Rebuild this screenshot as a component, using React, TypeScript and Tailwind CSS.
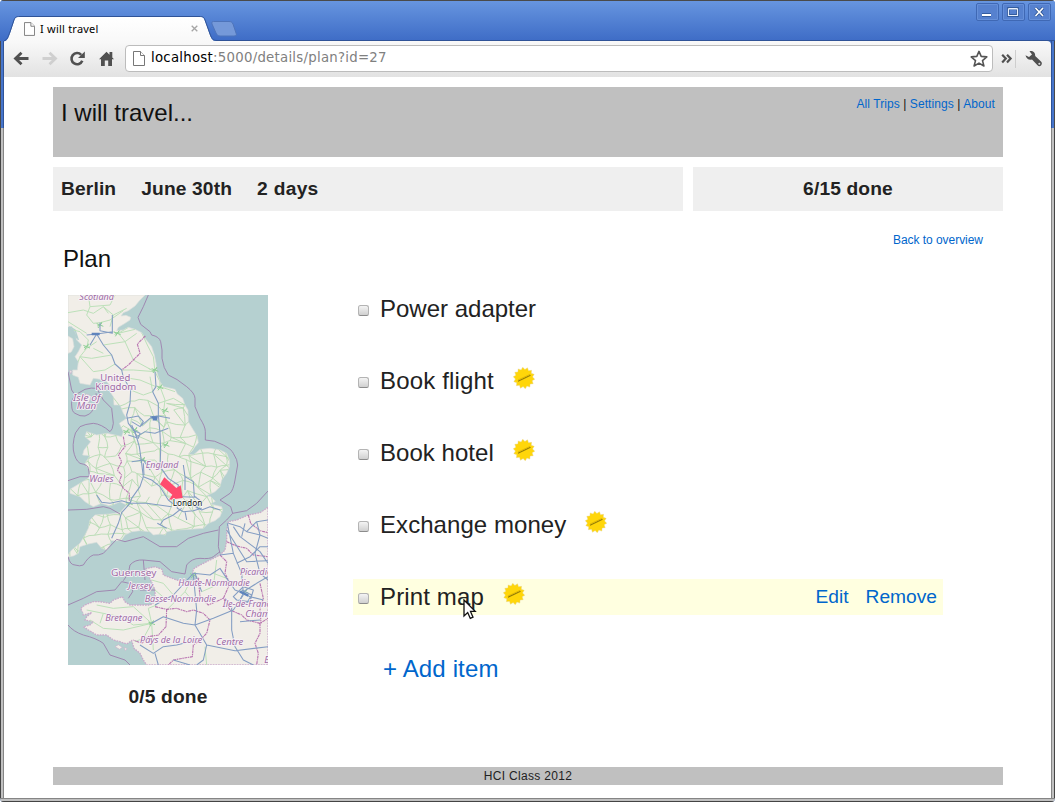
import React from "react";

const SANS = "font-['Liberation_Sans',Arial,sans-serif]";

const GB =
  "M24,15 L255,15 240,30 225,48 205,62 190,68 183,78 198,76 212,82 210,90 195,100 175,112 170,122 190,120 205,112 225,118 245,128 255,145 275,170 283,195 288,220 290,245 300,275 310,290 345,298 352,312 368,325 375,345 384,360 385,395 400,420 412,440 415,458 405,470 397,482 385,492 400,495 420,478 450,475 480,480 500,490 508,510 508,530 500,550 485,570 480,590 465,605 440,617 452,620 466,634 450,642 485,650 488,660 480,680 465,692 445,700 430,715 390,718 350,720 320,725 316,735 300,732 280,735 270,725 240,722 215,725 195,735 183,752 152,752 150,765 140,780 125,775 110,757 85,762 60,770 55,790 40,798 24,800 24,795 35,780 60,760 75,735 85,715 90,690 105,675 150,672 180,668 200,645 180,635 150,648 125,640 100,650 75,635 60,620 30,610 30,598 60,580 85,565 90,545 75,520 90,497 68,495 72,480 92,455 75,440 80,425 110,435 140,430 165,435 185,440 190,425 178,400 200,385 190,370 180,345 162,345 160,320 150,305 155,290 135,270 100,265 90,285 60,280 55,262 38,255 38,240 52,240 55,215 45,200 55,185 65,165 50,150 45,125 30,110 24,110 Z M24,138 L38,146 42,170 34,186 24,190 Z";
const FRANCE =
  "M624,652 L600,668 565,675 530,690 505,695 500,720 500,750 495,780 480,795 450,810 420,825 400,837 398,852 415,865 385,875 350,870 310,855 306,838 285,830 258,836 265,855 272,870 285,900 285,935 270,945 240,945 210,945 195,935 187,920 160,930 150,940 120,935 100,935 75,945 62,955 70,975 95,968 80,980 75,990 100,995 90,1005 70,1010 85,1020 110,1035 140,1035 160,1050 180,1055 200,1062 215,1052 222,1075 240,1090 250,1110 260,1125 624,1125 Z";

const seaBorders = [
  "M265,15 L250,50 234,82 242,103 270,125 275,135 Q298,140 302,155 Q308,180 306,205 Q310,235 325,255 Q350,265 380,290 Q405,310 405,325 L405,350 420,385 Q436,410 436,425 L436,450 Q465,450 490,465 Q515,478 520,490 Q533,510 533,525 L525,570 Q520,600 510,610 L480,630 512,650 518,670 500,690 478,710 475,770 480,790",
  "M518,670 L560,662 590,640 624,603",
  "M24,800 Q30,825 45,825 Q60,830 70,825 Q85,800 100,795 Q115,797 130,790 L170,748 195,755 250,740 300,770 350,770 385,745 430,730 475,720",
  "M24,245 L35,300 45,315 75,298 Q95,292 110,295 L130,330 155,355 160,400 Q158,420 150,425 Q125,402 100,400 Q75,402 60,410 Q42,430 42,445 Q38,465 40,480 Q45,510 60,520 Q85,525 85,535 Q90,560 85,560 L60,560 24,572",
  "M24,660 L80,658 130,650 150,655 180,672",
  "M45,315 Q32,335 35,345 Q35,365 45,370 Q60,380 75,378 Q92,372 95,365 L112,335 108,310",
  "M24,945 L70,925 110,905 165,900 185,875 230,885 240,900 285,900",
  "M205,850 L210,825 Q225,808 250,810 L300,815 335,845 375,852 380,825 Q395,805 420,805 Q450,808 460,800 L480,785",
  "M205,850 L190,872 M250,810 L255,870 M24,1005 Q40,1025 70,1035 Q110,1045 130,1060 L150,1095 195,1110 210,1125 M215,880 L218,905 205,925",
];

const regionBorders = [
  "M256,138 L232,162 240,190 225,205 205,225 185,240",
  "M190,440 L195,470 175,495 185,515 172,540 185,555 178,575 190,595 208,610 208,632",
  "M285,950 L320,958 350,955 380,965 400,960 430,970 450,990 440,1030 420,1050 400,1065 397,1100 340,1110 325,1125",
  "M320,958 L318,1010 295,1035 265,1040 245,1060 220,1050",
  "M415,865 L420,920 445,945 490,925 510,960 545,975 560,990 600,1000 624,985",
  "M480,795 L500,815 495,850 510,880 490,925",
  "M500,755 L530,768 560,775 580,795 624,800",
  "M565,675 L572,700 600,722 624,728",
  "M600,1000 L600,1030 585,1060 595,1090 590,1125",
  "M600,880 L610,925 600,955 603,1000",
];

const motorways = [
  "M157,75 L157,130 120,122 120,98 M80,135 L110,132 158,125 M110,132 L90,165 M110,132 L130,165 155,195 165,222 185,240 190,262 212,300 210,340 200,375 205,400 225,425 238,470 245,520 250,560 240,590 215,625 210,640 185,668 175,700 155,745",
  "M285,245 L288,290 278,305 295,340 295,375 300,430 302,480 300,530 325,565 355,585 352,608 365,615",
  "M200,385 L235,378 250,395 240,410 215,395 M270,380 L295,378 330,385 M240,410 L270,385 290,378 M215,405 L230,440 255,425 285,430 325,415 M218,420 L240,430 235,445 205,435",
  "M250,560 L275,570 300,590 325,630 350,650 M215,515 L250,510 270,540 M250,520 L252,555",
  "M110,615 L125,637 150,640 185,632 210,640 260,640 335,650 M300,705 L310,690 340,675 365,655 M292,700 L320,715",
  "M370,525 L375,560 375,600 M375,560 L400,575 403,620 M365,620 L410,622 M385,638 L425,660 450,650 480,660 M375,665 L380,690 M350,635 L352,655 370,665 400,662 425,655 M402,618 L425,635 410,655",
  "M505,700 L540,710 560,725 590,695 624,690 M502,700 L520,790 545,850 550,910 M520,710 L540,740 600,785 624,820 M560,725 L600,735 624,745 M500,720 L560,815 624,812 M480,795 L520,790 M590,695 L600,735 585,790 600,850 624,870 M545,740 L555,700 M530,820 L570,800 600,770 624,770",
  "M400,850 L450,855 480,835 500,865 525,900 550,910 M285,945 L340,915 400,850 M405,850 L425,905 M400,855 L410,960 405,1005 440,1065 M275,1000 L310,980 370,1000 405,1005 M405,1005 L460,985 520,960 550,915 M515,945 L515,1020 525,1070 550,1110 580,1125 M440,1065 L525,1082 624,1070 M440,1065 L430,1110 410,1125",
  "M550,890 L520,920 530,930 570,935 580,900 550,890 M550,910 L570,920 610,930 M550,910 L535,940 560,940 575,915 545,900 M540,995 L600,990 M240,1065 L280,1090 310,1070 350,1065 410,1050 M285,1090 L295,1125 M340,1110 L390,1125 M550,905 L590,880 624,860",
];

const greenRoads = [
  "M24,68 L70,60 100,70 130,50 160,75 200,55 M85,15 L90,50 80,75 100,100 120,98 M120,98 L150,90 190,62 M24,95 L80,130 M40,120 L60,125 85,150 80,175 60,200 45,240 M158,125 L175,130 205,112 M175,130 L195,155 220,210 275,240 M175,130 L225,118 M130,165 L195,155 230,130 M155,195 L95,205 60,200 M100,175 L130,190 M165,222 L135,240 100,245 60,200 M80,175 L110,155",
  "M185,240 L220,240 285,245 M285,245 L280,200 262,165 245,128 M285,245 L300,275 300,290 345,305 M285,245 L265,235 M190,262 L240,270 288,290 M212,300 L250,315 278,305 M295,340 L340,325 375,345 M300,290 L315,330 310,370 M278,305 L270,260 M160,75 L150,110 M90,50 L150,45 165,15 M130,50 L145,70",
  "M110,945 L160,955 220,950 275,1000 M80,960 L130,970 180,980 M180,980 L220,1005 275,1000 M275,1000 L265,955 290,945 M275,1000 L250,1045 225,1055 M90,990 L130,1015 190,1020 275,1000 M275,1000 L280,1080 M130,970 L120,1000 M400,855 L375,905 320,960 M425,905 L460,890 470,810 M460,850 L500,865 M435,1070 L440,1125 M340,915 L310,880 275,870 M375,905 L400,935 M285,900 L320,930",
];

const greenDots = [
  [285, 240],
  [300, 292],
  [172, 130],
  [120, 105],
  [316, 362],
  [200, 425],
  [225, 420],
  [318, 465],
  [248, 510],
  [275, 1000],
  [375, 640],
  [80, 170],
  [400, 855],
  [555, 905],
  [208, 640],
];

const noise = (a: number, b: number) => {
  const v = Math.sin(a * 127.1 + b * 311.7) * 43758.5453;
  return v - Math.floor(v);
};

const minorRoads = () => {
  const step = 31;
  const node = (i: number, j: number) => [
    24 + i * step + (noise(i, j) - 0.5) * 30,
    335 + j * step + (noise(j + 40, i) - 0.5) * 30,
  ];
  let d = "";
  for (let i = 0; i < 17; i++) {
    for (let j = 0; j < 15; j++) {
      const [x, y] = node(i, j);
      const [rx, ry] = node(i + 1, j);
      const [dx, dy] = node(i, j + 1);
      const [cx, cy] = node(i + 1, j + 1);
      const m = (noise(i + 9, j) - 0.5) * 12;
      if (noise(i, j + 70) > 0.15) d += `M${x},${y}Q${(x + rx) / 2},${(y + ry) / 2 + m} ${rx},${ry}`;
      if (noise(i + 30, j) > 0.15) d += `M${x},${y}Q${(x + dx) / 2 + m},${(y + dy) / 2} ${dx},${dy}`;
      if (noise(i + 5, j + 5) > 0.6) d += `M${x},${y}L${cx},${cy}`;
    }
  }
  return d;
};

type Label = { t: string; x: number; y: number; w: number; s?: number; up?: boolean };
const labels: Label[] = [
  { t: "Scotland", x: 58, y: 31, w: 104 },
  { t: "United", x: 121, y: 274, w: 90, s: 27, up: true },
  { t: "Kingdom", x: 106, y: 300, w: 123, s: 27, up: true },
  { t: "Isle of", x: 39, y: 332, w: 82 },
  { t: "Man", x: 50, y: 356, w: 59 },
  { t: "England", x: 257, y: 535, w: 98 },
  { t: "Wales", x: 88, y: 577, w: 73 },
  { t: "Guernsey", x: 153, y: 858, w: 136, s: 27, up: true },
  { t: "Jersey", x: 205, y: 898, w: 74 },
  { t: "Haute-Normandie", x: 355, y: 889, w: 214 },
  { t: "Picardie", x: 540, y: 855, w: 94 },
  { t: "Basse-Normandie", x: 254, y: 936, w: 214 },
  { t: "Île-de-France", x: 488, y: 950, w: 158 },
  { t: "Cham", x: 556, y: 982, w: 75 },
  { t: "Bretagne", x: 136, y: 992, w: 111 },
  { t: "Pays de la Loire", x: 240, y: 1058, w: 187 },
  { t: "Centre", x: 468, y: 1065, w: 82 },
  { t: "B", x: 613, y: 1119, w: 17 },
];

function TripMap() {
  return (
    <svg viewBox="24 15 600 1110" className="block h-[370px] w-[200px]">
      <defs>
        <clipPath id="gb">
          <path d={GB} />
        </clipPath>
        <clipPath id="land">
          <path d={GB + FRANCE} />
        </clipPath>
      </defs>
      <rect x="24" y="15" width="600" height="1110" fill="#b5d0d0" />
      <path d={GB} fill="#f1eee8" stroke="#dde0dc" strokeWidth="2" />
      <path d={FRANCE} fill="#f1eee8" stroke="#c9a9cb" strokeWidth="4" strokeDasharray="5 3" />
      <path d="M55,350 L62,325 80,312 94,318 88,335 70,352Z M165,1070 l10,-6 12,8 -8,6Z M192,1072 l10,4 -6,6Z M28,240 l8,4 -4,8Z" fill="#f1eee8" stroke="#c9b4cb" strokeWidth="2" />
      <path d="M24,120 L35,112 50,145 M28,110 L45,120 55,150 M40,940 L62,955 M45,962 L70,970 M60,1008 L75,1005" stroke="#b5d0d0" strokeWidth="4" fill="none" />
      <g fill="none" strokeLinejoin="round">
        <g clipPath="url(#land)">
          {greenRoads.map((d) => (
            <path key={d} d={d} stroke="#bce0b9" strokeWidth="3" />
          ))}
        </g>
        <g clipPath="url(#gb)">
          <path d={minorRoads()} stroke="#b7dcb4" strokeWidth="2.8" />
        </g>
        {seaBorders.map((d) => (
          <path key={d} d={d} stroke="#9b7bab" strokeWidth="3" opacity="0.85" />
        ))}
        {regionBorders.map((d) => (
          <path key={d} d={d} stroke="#b062a8" strokeWidth="3.4" strokeDasharray="9 2 4 2" opacity="0.85" />
        ))}
        {greenDots.map(([x, y]) => (
          <path key={`${x}-${y}`} d={`M${x - 10},${y - 4}l20,8M${x - 6},${y + 9}l12,-18M${x - 8},${y + 3}l14,-8`} stroke="#8fd096" strokeWidth="3" />
        ))}
        {motorways.map((d) => (
          <path key={d} d={d} stroke="#839dc3" strokeWidth="3.2" />
        ))}
        <path d="M95,132h24M275,382h18M278,388h14M540,905l25,12" stroke="#5f84bd" strokeWidth="7" />
      </g>
      <g fontFamily="'Noto Sans','DejaVu Sans',sans-serif" fill="#9d6ca3" stroke="#f8f2f8" strokeWidth="5" strokeLinejoin="round" paintOrder="stroke">
        {labels.map((l) => (
          <text key={l.t} x={l.x} y={l.y} textLength={l.w} lengthAdjust="spacingAndGlyphs" fontSize={l.s ?? 27} fontStyle={l.up ? "normal" : "italic"}>
            {l.t}
          </text>
        ))}
      </g>
      <path d="M313,562 L349,594 362,586 368,624 327,629 337,614 300,583Z" fill="#ff4b6e" />
      <text x="338" y="649" textLength="89" lengthAdjust="spacingAndGlyphs" fontFamily="'Noto Sans',sans-serif" fontSize="26" fill="#111" stroke="#fff" strokeWidth="4" paintOrder="stroke">
        London
      </text>
    </svg>
  );
}

function PageIcon({ className }: { className: string }) {
  return (
    <svg viewBox="0 0 12 15" className={className} fill="#fff" stroke="#777" strokeWidth="1">
      <path d="M.5,.5 H7.5 L11.5,4.5 V14.5 H.5Z" />
      <path d="M7.5,.5 V4.5 H11.5" />
    </svg>
  );
}

function WindowButton({ children }: { children: React.ReactNode }) {
  return (
    <div className="h-[18px] w-[23px] rounded-[2px] border border-[#3f68b4] bg-[#6690d9] p-px">
      <svg viewBox="0 0 19 14" className="block h-[14px] w-[19px] bg-[#5681cf]" fill="none">
        {children}
      </svg>
    </div>
  );
}

function Star() {
  let d = "";
  for (let i = 0; i < 28; i++) {
    const r = i % 2 ? 8.6 : 10.8;
    const a = (i * Math.PI) / 14 - Math.PI / 2 - 0.12;
    d += `${i ? "L" : "M"}${(11 + r * Math.cos(a)).toFixed(2)},${(11 + r * Math.sin(a)).toFixed(2)}`;
  }
  return (
    <svg viewBox="0 0 22 22" className="-mt-[6px] h-[22px] w-[22px] shrink-0">
      <path d={d + "Z"} fill="#ffd60a" stroke="#e2d28a" strokeWidth=".4" />
      <path d="M5,14.2 L17.5,8.3" stroke="#957d08" strokeWidth="1.2" />
      <path d="M5,13 L17,7.4" stroke="#d5af05" strokeWidth=".7" />
    </svg>
  );
}

function Item({ text, star, active, tracking = "" }: { text: string; star?: boolean; active?: boolean; tracking?: string }) {
  return (
    <div className={`relative flex h-9 w-[590px] items-center pl-[5px] ${active ? "bg-[#ffffe0]" : ""}`}>
      <span className="mt-[3px] h-[11px] w-[11px] rounded-[2.5px] border border-[#b4b4b4] border-b-[#8c8c8c] bg-linear-to-b from-[#f4f4f4] to-[#d0d0d0]" />
      <span className={`ml-[11px] whitespace-nowrap text-[24px] leading-9 text-[#222] ${tracking}`}>{text}</span>
      {star && (
        <span className="ml-[19px] flex">
          <Star />
        </span>
      )}
      {active && (
        <>
          <span className="ml-auto flex gap-[17px] pr-[6px] text-[19.2px] text-[#0066cc]">
            <span>Edit</span>
            <span>Remove</span>
          </span>
          <svg viewBox="0 0 14 22" className="absolute left-[110px] top-[20px] h-[22px] w-[14px]">
            <path d="M1,1 V17 L4.7,13.6 L7.3,19.4 L10,18.2 L7.5,12.4 H12.2Z" fill="#fff" stroke="#111" strokeWidth="1.3" />
          </svg>
        </>
      )}
    </div>
  );
}

function TitleBar() {
  return (
    <div className="relative flex h-[41px] shrink-0 justify-between bg-linear-to-b from-[#6896e0] to-[#3e6cc6]">
      <div className="relative mt-[16px] h-[25px] w-[240px]">
        <svg viewBox="0 0 240 26" className="absolute left-0 top-0 h-[26px] w-[240px]">
          <defs>
            <linearGradient id="tab" x1="0" y1="0" x2="0" y2="1">
              <stop offset="0" stopColor="#fff" />
              <stop offset="1" stopColor="#f8f8f8" />
            </linearGradient>
          </defs>
          <path d="M4,26 C8,24 8,22 10,17 L14,5 C15,2 16,.8 20,.8 H199 C203,.8 204,2 205,5 L210,19 C212,24 213,25 217,25 V26Z" fill="url(#tab)" />
          <path d="M4,25 C8,23 8,21 10,16 L14,4 C15,1.2 16,.5 20,.5 H199 C203,.5 204,1.2 205,4 L210,18 C212,23.5 213,24.5 217,24.5 H240" fill="none" stroke="#2f5397" strokeWidth="1" />
          <path d="M213.5,5.5 H229 C231,5.5 232,6 233,8 L236,17 C237,19 236,20 234,20 H220 C218,20 217,19 216,17 L212,8 C211.500,6.500 212,5.500 213.500,5.500Z" fill="#7599d9" stroke="#4e74ba" />
        </svg>
        <div className="relative flex h-[25px] items-center pl-[24px]">
          <PageIcon className="h-[14px] w-[11px]" />
          <span className="ml-[5px] w-[60px] whitespace-nowrap font-['Noto_Sans',sans-serif] text-[11px] leading-[16px] tracking-[0.22px] text-black">I will travel</span>
          <svg viewBox="0 0 8 8" className="ml-[91px] h-[7px] w-[7px]">
            <path d="M.8,.8 L7.200,7.200 M7.200,.8 L.8,7.200" stroke="#a5a5a5" strokeWidth="1.500" />
          </svg>
        </div>
      </div>
      <div className="flex gap-[3px] pr-[4px] pt-[3px]">
        <WindowButton>
          <path d="M4,10 H13" stroke="#29508f" strokeWidth="3.500" />
          <path d="M4,10 H13" stroke="#fff" strokeWidth="2" />
        </WindowButton>
        <WindowButton>
          <path d="M4.500,3.500 H13.500 V10.500 H4.500Z" stroke="#29508f" strokeWidth="2.600" />
          <path d="M4.500,4 H13.500 V10.500 H4.500Z M4.500,3.500 H13.500" stroke="#e8effc" strokeWidth="1.200" />
        </WindowButton>
        <WindowButton>
          <path d="M5.500,3 L13,11 M13,3 L5.500,11" stroke="#29508f" strokeWidth="3.200" />
          <path d="M5.500,3 L13,11 M13,3 L5.500,11" stroke="#fff" strokeWidth="1.700" />
        </WindowButton>
      </div>
      <div className="absolute inset-x-0 top-0 h-px bg-[#4a4a4a]" />
      <div className="absolute bottom-0 left-[217px] right-0 h-px bg-[#2f5397]" />
    </div>
  );
}

function Toolbar() {
  return (
    <div className="flex h-[36px] shrink-0 items-start rounded-tr-[4px] bg-linear-to-b from-[#f9f9f9] to-[#e2e2e2] pt-[4px]">
      <svg viewBox="0 0 116 28" className="h-[28px] w-[116px] shrink-0" fill="none">
        <path d="M24.500,13.500 H12 M17.500,7.800 L11.500,13.500 L17.500,19.200" stroke="#505050" strokeWidth="2.800" />
        <path d="M38.500,13.500 H51 M45.500,7.800 L51.500,13.500 L45.500,19.200" stroke="#cfcfcf" strokeWidth="2.800" />
        <path d="M78.300,15.800 A5.600,5.600 0 1 1 77.200,9.800" stroke="#505050" strokeWidth="2.600" />
        <path d="M80.800,6.500 V13 H74Z" fill="#505050" />
        <path d="M95,14.200 L102.500,6.800 L105.500,9.700 V7 H108.300 V12.500 L110,14.200 H108 V21 H104.200 V15.500 H100.800 V21 H97 V14.200Z" fill="#505050" />
      </svg>
      <div className="ml-[5px] flex h-[27px] w-[868px] shrink-0 items-center rounded-[4px] border border-[#bcbcbc] bg-white pl-[7px] pr-[4px]">
        <PageIcon className="h-[15px] w-[12px]" />
        <span className="-mt-[2px] ml-[6px] whitespace-nowrap font-['DejaVu_Sans',sans-serif] text-[13.3px] tracking-[0.26px] text-[#808080]">
          <span className="text-black">localhost</span>:5000/details/plan?id=27
        </span>
        <svg viewBox="0 0 18 18" className="ml-auto h-[18px] w-[18px]">
          <path d="M9,1.400 L11.200,6.400 L16.800,6.900 L12.500,10.600 L13.900,16 L9,13.100 L4.100,16 L5.500,10.600 L1.200,6.900 L6.800,6.400Z" fill="#fff" stroke="#555" strokeWidth="1.600" strokeLinejoin="round" />
        </svg>
      </div>
      <svg viewBox="0 0 58 28" className="h-[28px] w-[58px] shrink-0" fill="none">
        <path d="M9.200,9.800 L12.800,13.600 L9.200,17.400 M14,9.800 L17.600,13.600 L14,17.400" stroke="#505050" strokeWidth="2.200" />
        <path d="M22.500,5 V23" stroke="#cecece" />
        <path d="M36.500,6.300 C39.500,5.500 42.500,7.500 42.200,11 L48,16.600 C49.300,18 49,19.500 48,20.500 C47,21.500 45.500,21.500 44.500,20.300 L39,14.500 C36,15.400 33,13.500 32.500,10.200 L36,12 L39,9.500 Z" fill="#505050" />
        <circle cx="46.300" cy="18.700" r="1" fill="#ddd" />
      </svg>
    </div>
  );
}

function Page() {
  return (
    <div className={`flex grow flex-col bg-white px-[49px] pt-[10px] ${SANS} text-[12px] text-[#222]`}>
      <header className="flex h-[70px] w-[950px] justify-between bg-[#c0c0c0] px-[8px]">
        <div className="pt-[8px] text-[24px] leading-[36px] text-[#111]">I will travel...</div>
        <div className="whitespace-pre pt-[8px] leading-[18px] tracking-[0.08px] text-[#111]">
          <span className="text-[#0066cc]">All Trips</span> | <span className="text-[#0066cc]">Settings</span> | <span className="text-[#0066cc]">About</span>
        </div>
      </header>
      <div className="mt-[10px] flex w-[950px] gap-[10px] text-[19.2px] font-bold leading-[43px] tracking-[0.14px]">
        <div className="flex h-[44px] w-[630px] shrink-0 gap-[25px] bg-[#efefef] pl-[8px]">
          <span>Berlin</span>
          <span>June 30th</span>
          <span className="tracking-[0.3px]">2 days</span>
        </div>
        <div className="h-[44px] w-[310px] bg-[#efefef] text-center">6/15 done</div>
      </div>
      <div className="mt-[20px] flex h-[64px] w-[950px] justify-between pl-[10px] pr-[20px]">
        <h1 className="pt-[10px] text-[24px] leading-[36px] text-[#111]">Plan</h1>
        <span className="leading-[18px] tracking-[-0.04px] text-[#0066cc]">Back to overview</span>
      </div>
      <div className="flex h-[472px] w-[950px] pl-[15px]">
        <div className="w-[200px]">
          <TripMap />
          <div className="mt-[18px] text-center text-[19.2px] font-bold leading-[28px] tracking-[0.14px]">0/5 done</div>
        </div>
        <div className="-mt-[4px] ml-[85px] flex flex-col gap-[36px]">
          <Item text="Power adapter" />
          <Item text="Book flight" star tracking="tracking-[0.17px]" />
          <Item text="Book hotel" star tracking="tracking-[0.04px]" />
          <Item text="Exchange money" star tracking="tracking-[0.06px]" />
          <Item text="Print map" star active tracking="tracking-[0.13px]" />
          <div className="pl-[30px] text-[24px] leading-[36px] tracking-[0.15px] text-[#0066cc]">+ Add item</div>
        </div>
      </div>
      <footer className="h-[18px] w-[950px] bg-[#c0c0c0] text-center leading-[18px] tracking-[0.33px]">HCI Class 2012</footer>
    </div>
  );
}

function SideFrame({ right }: { right?: boolean }) {
  return (
    <div className={`flex w-[4px] shrink-0 flex-col ${right ? "-scale-x-100" : ""}`}>
      <div className="h-[87px] border-l border-r border-l-[#4a4a4a] border-r-[#2f5397] bg-[#4675cb]" />
      <div className="grow border-l border-r border-l-[#444] border-r-[#858585] bg-[#c0c0c0]" />
    </div>
  );
}

export default function App() {
  return (
    <div className="flex h-[802px] w-[1055px] flex-col overflow-hidden rounded-[4px] bg-[#3e6cc6]">
      <TitleBar />
      <div className="flex h-[757px] shrink-0">
        <SideFrame />
        <div className="flex w-[1047px] flex-col">
          <Toolbar />
          <Page />
        </div>
        <SideFrame right />
      </div>
      <div className="h-[4px] shrink-0 border-b border-t border-b-[#444] border-t-[#858585] bg-[#c0c0c0]" />
    </div>
  );
}
